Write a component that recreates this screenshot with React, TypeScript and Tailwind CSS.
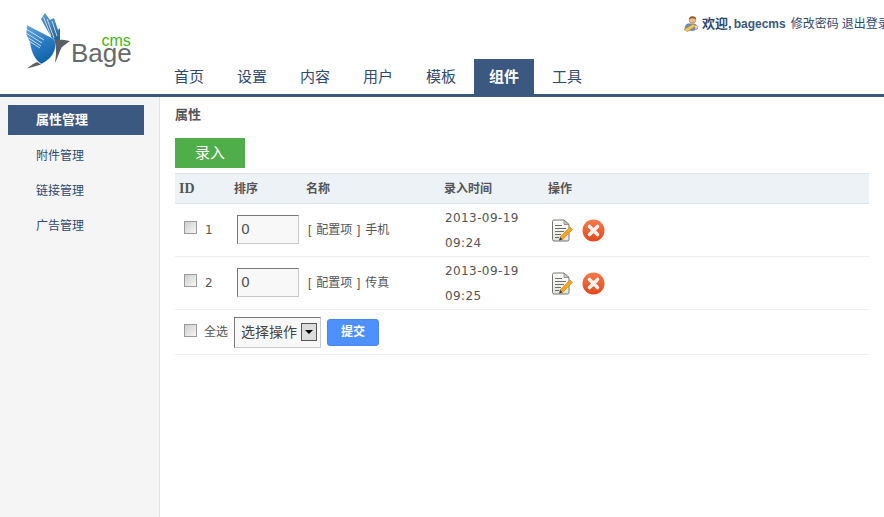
const tabs = ['首页', '设置', '内容', '用户', '模板', '组件', '工具'];
const sideItems = ['属性管理', '附件管理', '链接管理', '广告管理'];
const rows = [
  { id: 1, name: '手机', time: '09:24' },
  { id: 2, name: '传真', time: '09:25' },
];

const cjk = "font-['Liberation_Sans','Noto_Sans_CJK_SC',sans-serif]";

function BirdLogo() {
  return (
    <svg width="47" height="60" viewBox="24 12 47 60" className="shrink-0">
      <defs>
        <linearGradient id="wing" gradientUnits="userSpaceOnUse" x1="28" y1="22" x2="48" y2="62">
          <stop offset="0" stopColor="#6aaae0" />
          <stop offset="0.55" stopColor="#2c7cc4" />
          <stop offset="1" stopColor="#0c5fa6" />
        </linearGradient>
        <linearGradient id="wingDark" gradientUnits="userSpaceOnUse" x1="45" y1="13" x2="56" y2="44">
          <stop offset="0" stopColor="#5a9ad0" />
          <stop offset="1" stopColor="#1a5c90" />
        </linearGradient>
      </defs>
      {/* back wing */}
      <path d="M41 19 L45 13 L50 20 L54 18 L58 30 L60 28 L60 42 L54 42 Z" fill="url(#wingDark)" />
      <g stroke="#fff" strokeWidth="0.7" fill="none">
        <path d="M43.5 17 L51 36" />
        <path d="M47 19 L54 38" />
        <path d="M52 21 L57 36" />
      </g>
      {/* front wing */}
      <path d="M27 25 L54 39 C59 49 51 60 41 64 C35 60 31 52 30 43 L26 34 Z" fill="url(#wing)" stroke="#fff" strokeWidth="0.4" />
      <g stroke="#fff" strokeWidth="0.7" fill="none">
        <path d="M26 29 L44 40" />
        <path d="M26 33 L42 43" />
        <path d="M27 37 L41 46" />
        <path d="M29 41 L40 48" />
      </g>
      {/* head, tail */}
      <path d="M54.5 41 C58 39 63 40 70 41 L62 47 C60 50 58 57 55 63 C56 56 57 47 54.5 41 Z" fill="#5b5f63" />
      <path d="M27 68.5 L33 64 L37 62 L41 64.5 C37 66 32 67 27 68.5 Z" fill="#5b5f63" />
    </svg>
  );
}

function UserIcon() {
  return (
    <svg width="17" height="17" viewBox="0 0 17 17" className="shrink-0">
      <path d="M2 15 C1 11 3 8.5 6 8.5 L11 8.5 C14 9.5 15 11 15 14 L10 16 Z" fill="#6b8db5" />
      <circle cx="9.5" cy="4.8" r="3.4" fill="#eebd8f" stroke="#a86c3a" strokeWidth="0.6" />
      <path d="M6 4.3 C6 1 12.8 0.3 13.2 4.4 C11 2.8 8.5 2.8 6 4.3 Z" fill="#8a5426" />
      <path d="M1 14.5 L10 9 L13 11 L4.5 16.5 Z" fill="#f2c75c" stroke="#b07d22" strokeWidth="0.6" />
      <path d="M11.5 10 L15.5 11.5 L12.5 15 Z" fill="#e9e4d2" stroke="#a89b76" strokeWidth="0.5" />
    </svg>
  );
}

function EditIcon() {
  return (
    <svg width="22" height="23" viewBox="0 0 22 23" className="shrink-0">
      <defs>
        <linearGradient id="page" x1="0" y1="0" x2="0" y2="1">
          <stop offset="0" stopColor="#ffffff" />
          <stop offset="1" stopColor="#e2e2dc" />
        </linearGradient>
      </defs>
      <path d="M1.5 2.5 Q1.5 1 3 1 L13 1 L18 5.5 L18 20.5 Q18 22 16.5 22 L3 22 Q1.5 22 1.5 20.5 Z" fill="url(#page)" stroke="#77776f" />
      <path d="M13 1 L13 5.5 L18 5.5 Z" fill="#c9c9c2" stroke="#77776f" strokeWidth="0.7" />
      <path d="M4 6.5 H11 M4 9.5 H15 M4 12.5 H13 M4 15.5 H10 M4 18.5 H8" stroke="#6d6d68" strokeWidth="1" />
      <path d="M9 18 L19 8 L21.5 10.5 L11.5 20.5 Z" fill="#f4a623" stroke="#c77c12" strokeWidth="0.6" />
      <path d="M9 18 L11.5 20.5 L8 21.5 Z" fill="#3a3a36" />
    </svg>
  );
}

function DeleteIcon() {
  return (
    <svg width="23" height="23" viewBox="0 0 23 23" className="shrink-0">
      <defs>
        <linearGradient id="red" x1="0" y1="0" x2="0" y2="1">
          <stop offset="0" stopColor="#f47a4c" />
          <stop offset="1" stopColor="#e4481c" />
        </linearGradient>
      </defs>
      <circle cx="11.5" cy="11.5" r="11" fill="url(#red)" />
      <path d="M7.5 7.5 L15.5 15.5 M15.5 7.5 L7.5 15.5" stroke="#fdf3ec" strokeWidth="3.6" strokeLinecap="round" />
    </svg>
  );
}

function Check({ className = '' }: { className?: string }) {
  return (
    <input
      type="checkbox"
      className={`appearance-none block w-[13px] h-[13px] border border-[#9b9b9b] bg-linear-to-br from-[#cfcfcf] to-[#f6f6f6] shrink-0 ${className}`}
    />
  );
}

export default function App() {
  return (
    <div className={`${cjk} h-screen w-[884px] overflow-hidden bg-white flex flex-col text-[12px] text-[#555]`}>
      <header className="h-[97px] shrink-0 border-b-[3px] border-[#3b5880] flex">
        <div className="w-[159px] shrink-0 pl-[24px] pt-[12px] flex items-start">
          <BirdLogo />
          <div className="flex flex-col items-end pt-[23px]">
            <span className="text-[16px] leading-[12px] text-[#43b512] pr-[1px]">cms</span>
            <span className="text-[26px] leading-[12px] text-[#666a6d]">Bage</span>
          </div>
        </div>
        <div className="flex-1 min-w-0 flex flex-col justify-between">
          <div className="flex items-center pl-[524px] pt-[15px] h-[32px] whitespace-nowrap text-[#2f4a70]">
            <UserIcon />
            <span className="ml-[2px] text-[13px] font-bold">欢迎,</span>
            <span className="ml-[2px] font-bold text-[#3b5880]">bagecms</span>
            <span className="ml-[5px]">修改密码</span>
            <span className="ml-[3px]">退出登录</span>
          </div>
          <nav className="flex gap-[3px]">
            {tabs.map((t) => (
              <a
                key={t}
                className={`h-[35px] px-[15px] pt-[2px] flex items-center text-[15px] ${
                  t === '组件' ? 'bg-[#3b5880] text-white font-bold' : 'text-[#2f4a70]'
                }`}
              >
                {t}
              </a>
            ))}
          </nav>
        </div>
      </header>

      <div className="flex-1 flex min-h-0">
        <aside className="w-[160px] shrink-0 bg-[#f5f5f5] border-r border-[#e3e3e3] pt-[8px] pl-[8px]">
          {sideItems.map((s, i) => (
            <a
              key={s}
              className={`w-[136px] pl-[28px] flex items-center ${
                i === 0
                  ? 'h-[30px] mb-[3px] bg-[#3b5880] text-white font-bold text-[13px]'
                  : 'h-[35px] text-[#2f4a70]'
              }`}
            >
              {s}
            </a>
          ))}
        </aside>

        <main className="flex-1 min-w-0 pl-[15px] pr-[15px] pt-[8px]">
          <h3 className="text-[13px] font-bold leading-[20px] text-[#555]">属性</h3>
          <button className="mt-[13px] block w-[70px] h-[30px] bg-[#4fae49] text-white text-[15px]">录入</button>

          <div className="mt-[5px]">
            <div className="grid grid-cols-[55px_72px_138px_104px_1fr] items-center pl-[4px] h-[31px] bg-[#edf2f7] border-y border-[#dde4ea] font-bold">
              <span className="font-['Liberation_Serif',serif] text-[14px]">ID</span>
              <span>排序</span>
              <span>名称</span>
              <span>录入时间</span>
              <span>操作</span>
            </div>

            {rows.map((r) => (
              <div
                key={r.id}
                className="grid grid-cols-[55px_72px_138px_104px_1fr] items-center pl-[4px] h-[53px] border-b border-[#eeeeee]"
              >
                <div className="flex items-center pl-[5px]">
                  <Check className="-mt-[5px]" />
                  <span className="ml-[8px] font-['DejaVu_Sans',sans-serif]">{r.id}</span>
                </div>
                <div className="pl-[3px] pb-[2px]">
                  <input
                    defaultValue="0"
                    className="block w-[62px] h-[29px] pl-[3px] text-[14px] font-['DejaVu_Sans',sans-serif] text-[#555] bg-[#f8f8f8] border border-[#c9c9c9] border-t-[#777] border-l-[#777]"
                  />
                </div>
                <span className="pl-[2px] [word-spacing:1.5px]">[ 配置项 ] {r.name}</span>
                <div className="pl-[1px] pt-[1px] leading-[25px] font-['DejaVu_Sans',sans-serif] tracking-[0.4px]">
                  <div>2013-09-19</div>
                  <div>{r.time}</div>
                </div>
                <div className="flex items-center gap-[9px] pl-[3px]">
                  <EditIcon />
                  <DeleteIcon />
                </div>
              </div>
            ))}

            <div className="flex items-center h-[45px] pl-[9px] border-b border-[#eeeeee]">
              <Check className="-mt-[4px]" />
              <span className="ml-[7px]">全选</span>
              <div className="ml-[6px] w-[87px] h-[31px] flex items-center justify-between pl-[6px] pr-[3px] bg-[#f8f8f8] border border-[#c9c9c9] border-t-[#777] border-l-[#777] text-[14px] text-[#444]">
                <span>选择操作</span>
                <span className="w-[16px] h-[18px] flex items-center justify-center bg-[#dcdcdc] border border-[#555]">
                  <span className="w-0 h-0 border-x-[4px] border-x-transparent border-t-[4px] border-t-black" />
                </span>
              </div>
              <button className="ml-[6px] w-[52px] h-[27px] rounded-[3px] bg-[#4d90fe] border border-[#4a86e8] text-white font-bold">提交</button>
            </div>
          </div>
        </main>
      </div>
    </div>
  );
}
